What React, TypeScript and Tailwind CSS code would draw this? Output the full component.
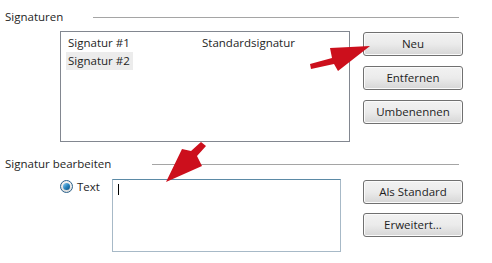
const font = { fontFamily: '"Open Sans", "Noto Sans", sans-serif' };

const WinButton = ({ label }: { label: string }) => (
  <button className="w-[100px] h-[24px] rounded-[3px] border border-[#707070] bg-gradient-to-b from-[#f2f2f2] via-[#ebebeb] to-[#d6d6d6] text-[11.5px] leading-none text-[#1e1e1e] shadow-[inset_0_0_0_1px_#fbfbfb]">
    {label}
  </button>
);

const GroupHeader = ({ title, labelWidth }: { title: string; labelWidth: string }) => (
  <div className="flex items-center h-4 pl-[5px] pr-[33px]">
    <span className={`text-[11.5px] leading-4 text-[#1e1e1e] whitespace-nowrap ${labelWidth}`}>{title}</span>
    <div className="flex-1 h-px bg-[#a5a5a5]" />
  </div>
);

export default function App() {
  return (
    <div className="relative w-[492px] h-[263px] bg-white overflow-hidden" style={font}>
      <div className="flex flex-col pt-[9px]">
        <GroupHeader title="Signaturen" labelWidth="w-[88px]" />

        <div className="flex items-start mt-[6px] pl-[60px]">
          <div className="w-[290px] h-[111px] border border-[#828790] pt-[2px] pl-[5px] text-[11.5px] text-[#1e1e1e]">
            <div className="flex h-[18px] items-center">
              <span className="w-[136px] pl-[2px]">Signatur #1</span>
              <span>Standardsignatur</span>
            </div>
            <div className="flex h-[18px] items-center">
              <span className="w-[67px] pl-[2px] bg-[#ececec] h-full flex items-center whitespace-nowrap">Signatur #2</span>
            </div>
          </div>
          <div className="flex flex-col gap-[10px] ml-[13px] mt-px">
            <WinButton label="Neu" />
            <WinButton label="Entfernen" />
            <WinButton label="Umbenennen" />
          </div>
        </div>

        <div className="mt-[14px]">
          <GroupHeader title="Signatur bearbeiten" labelWidth="w-[147px]" />
        </div>

        <div className="flex items-start mt-[7px] pl-[60px]">
          <div className="flex items-center w-[52px] h-[14px]">
            <span className="w-[13px] h-[13px] rounded-full border border-[#2c628b] bg-gradient-to-b from-[#f4f4f4] to-[#dcdcdc] flex items-center justify-center">
              <span className="w-[7px] h-[7px] rounded-full bg-gradient-to-br from-[#8fd2f5] via-[#2a87c0] to-[#0e4f80]" />
            </span>
            <span className="ml-[4px] text-[11.5px] leading-4 text-[#1e1e1e] mt-px">Text</span>
          </div>
          <div className="w-[229px] h-[73px] border border-[#a7b9c7] border-t-[#5b8aa6] pl-[5px] pt-[4px]">
            <div className="w-px h-[11px] bg-black" />
          </div>
          <div className="flex flex-col gap-[9px] ml-[22px] mt-px">
            <WinButton label="Als Standard" />
            <WinButton label="Erweitert..." />
          </div>
        </div>
      </div>

      <svg className="absolute inset-0 pointer-events-none" width="492" height="263" viewBox="0 0 492 263">
        <polygon
          points="310,64 332,58 330,48 370,46 338,71 334,64 311,69"
          fill="#cc0f1c"
        />
        <polygon
          points="201,142 206,146 197,156 202,166 166,182 182,149 191,151"
          fill="#cc0f1c"
        />
      </svg>
    </div>
  );
}
